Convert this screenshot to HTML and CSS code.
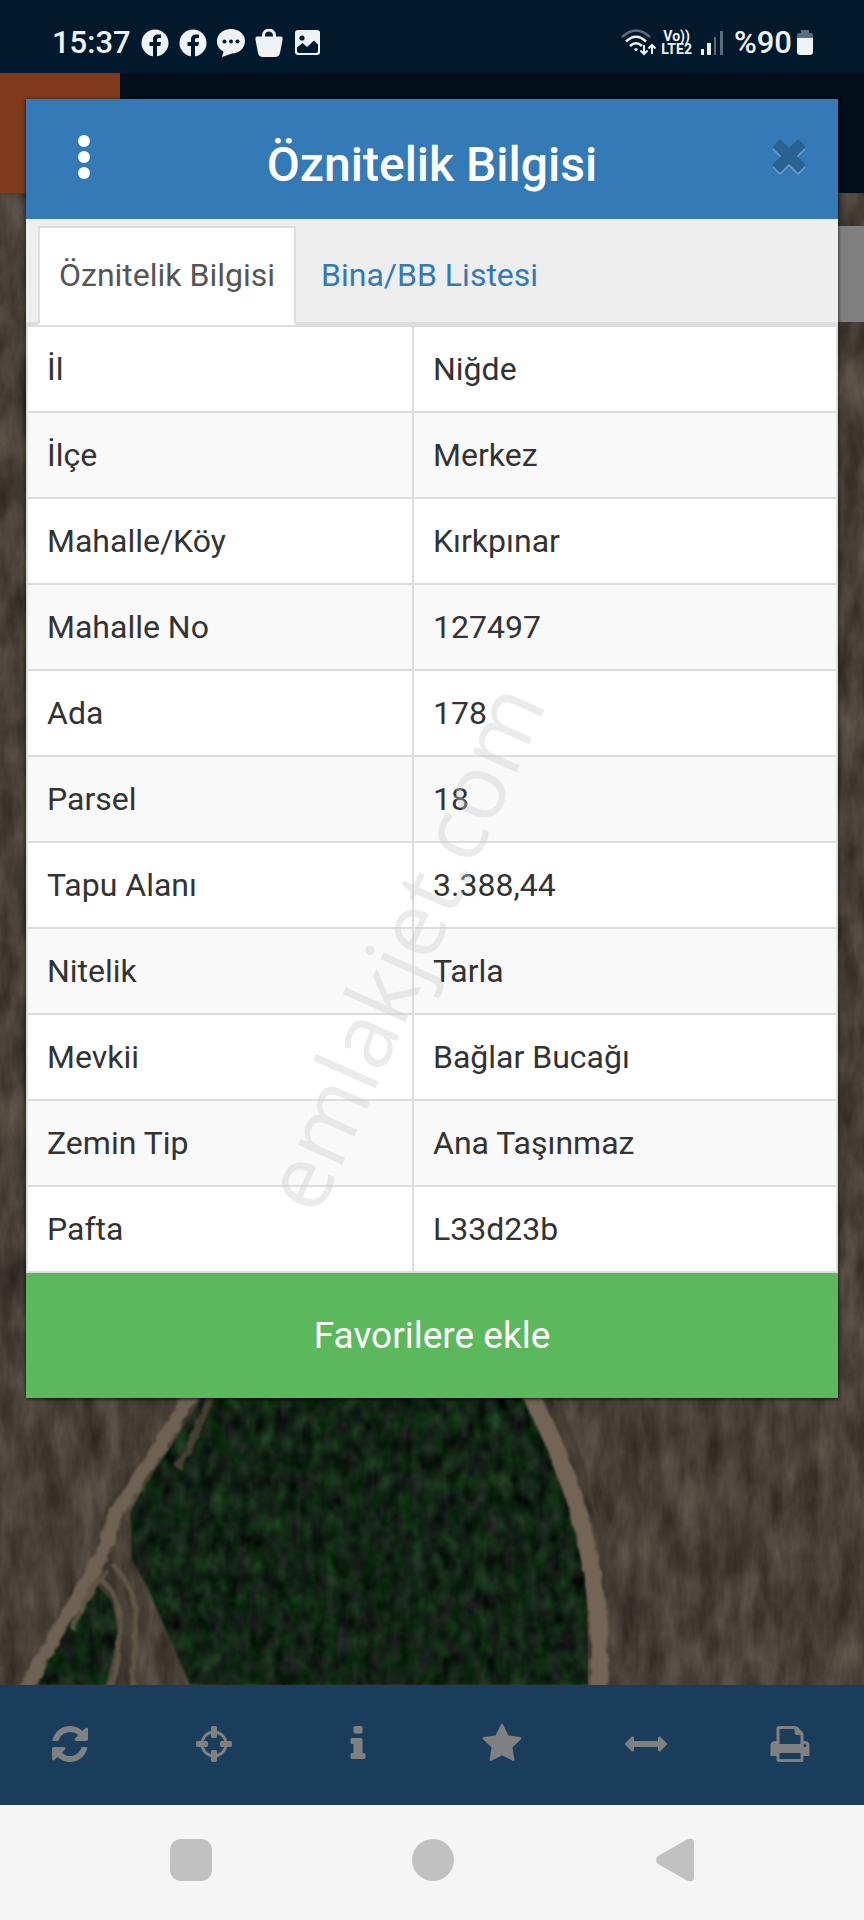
FILE: index.html
```html
<!DOCTYPE html>
<html lang="tr">
<head>
  <meta charset="UTF-8" />
  <meta name="viewport" content="width=device-width, initial-scale=1.0" />
  <title>Öznitelik Bilgisi</title>
  <link rel="stylesheet" href="styles.css">
</head>
<body>
  <div class="screen">
    <header class="status-bar">
      <div class="status-left">
        <span class="clock">15:37</span>
        <svg class="status-icon" viewBox="0 0 28 28"><circle cx="14" cy="14" r="13.500" fill="#eef2f4"/><path d="M12 28V17H8.500v-4H12v-2.500C12 7 14 5.500 17 5.500h3V9h-2c-1.500 0-2 .7-2 2v2h4l-.7 4H16v11z" fill="#00192c"/></svg>
        <svg class="status-icon" viewBox="0 0 28 28"><circle cx="14" cy="14" r="13.500" fill="#eef2f4"/><path d="M12 28V17H8.500v-4H12v-2.500C12 7 14 5.500 17 5.500h3V9h-2c-1.500 0-2 .7-2 2v2h4l-.7 4H16v11z" fill="#00192c"/></svg>
        <svg class="status-icon" viewBox="0 0 28 28"><path d="M14 0c8 0 14 5 14 12s-6 12.500-13 12.500L5 28l1.500-5.500C2.500 20.500 0 17 0 12.500 0 5 6 0 14 0z" fill="#eef2f4"/><g fill="#00192c"><circle cx="7.500" cy="12.500" r="2"/><circle cx="14" cy="12.500" r="2"/><circle cx="20.500" cy="12.500" r="2"/></g></svg>
        <svg class="status-icon" viewBox="0 0 28 28"><path d="M8.500 9V6.500a5.500 5.500 0 0 1 11 0V9" fill="none" stroke="#eef2f4" stroke-width="3"/><path d="M2 7.500h24q2 0 1.600 2.500l-2.600 14q-.8 4-5 4H8q-4.200 0-5-4L.4 10Q0 7.500 2 7.500z" fill="#eef2f4"/></svg>
        <svg class="status-icon" viewBox="0 0 28 28"><rect x="2" y="1" width="25" height="25" rx="3" fill="#eef2f4"/><circle cx="9" cy="9" r="2.600" fill="#00192c"/><path d="M4 18.500l5.500-4.500 4.500 4 7-6.500 4 4v6.500q0 2-2 2H6q-2 0-2-2z" fill="#00192c"/></svg>
      </div>
      <div class="status-right">
        <svg class="wifi-icon" viewBox="0 0 36 28"><g fill="none" stroke="#eef2f4" stroke-width="2.600"><path d="M1 8Q15-5 29 8" stroke="#5a6d7b" stroke-width="2.500"/><path d="M5 12.500Q15 3 25 12.500"/><path d="M9 17q6-5.500 12 0"/></g><circle cx="15" cy="20.500" r="1.600" fill="#eef2f4"/><path d="M23 16v9M19.500 21.500l3.500 3.500 3.500-3.500M31 25v-9M27.500 19.500L31 16l3.500 3.500" fill="none" stroke="#eef2f4" stroke-width="2"/></svg>
        <span class="volte"><span>Vo))</span><span>LTE2</span></span>
        <svg class="signal-icon" viewBox="0 0 24 28"><path d="M1 20h3v6H1zM7 14h4v12H7z" fill="#eef2f4"/><path d="M14 8h2v18h-2zM20 2h3v24h-3z" fill="#5a6d7b"/></svg>
        <span class="battery-text">%90</span>
        <svg class="battery-icon" viewBox="0 0 18 28"><path d="M5 1h8v3h2q2 0 2 2v4H1V6q0-2 2-2h2z" fill="#5a6d7b"/><path d="M1 9h16v14q0 3-3 3H4q-3 0-3-3z" fill="#eef2f4"/></svg>
      </div>
    </header>

    <div class="app-bar"><div class="app-logo"></div></div>

    <main class="map">
      <svg class="map-image" viewBox="0 0 864 1492" preserveAspectRatio="xMidYMax slice" aria-hidden="true">
        <defs>
          <filter id="soil" x="0" y="0" width="100%" height="100%" color-interpolation-filters="sRGB">
            <feTurbulence type="fractalNoise" baseFrequency="0.05 0.018" numOctaves="5" seed="8"/>
            <feColorMatrix values="0.26 0 0 0 0.15  0.25 0 0 0 0.125  0.23 0 0 0 0.1  0 0 0 0 1"/>
            <feComposite in2="SourceGraphic" operator="in"/>
          </filter>
          <filter id="trees" x="0" y="0" width="100%" height="100%" color-interpolation-filters="sRGB">
            <feTurbulence type="fractalNoise" baseFrequency="0.08 0.05" numOctaves="4" seed="3"/>
            <feColorMatrix values="0.2 0 0 0 -0.03  0.18 0.22 0 0 -0.06  0.2 0 0 0 -0.02  0 0 0 0 1"/>
            <feComposite in2="SourceGraphic" operator="in"/>
            <feGaussianBlur stdDeviation="1"/>
          </filter>
          <filter id="rough" x="-10%" y="-10%" width="120%" height="120%" color-interpolation-filters="sRGB">
            <feTurbulence type="fractalNoise" baseFrequency="0.08" numOctaves="2" seed="5"/>
            <feDisplacementMap in="SourceGraphic" scale="6"/>
            <feGaussianBlur stdDeviation="1"/>
          </filter>
        </defs>
        <g filter="url(#soil)"><rect width="864" height="1492" fill="#4b4239"/></g>
        <!-- field -->
        <g filter="url(#trees)"><path d="M215 1180C185 1240 152 1275 130 1320L132 1366 150 1400 190 1492H588L587 1380 576 1325 554 1256 518 1180zM98 1392L112 1410 118 1440 106 1492H38L60 1440z" fill="#13251a"/></g>
        <!-- dirt roads -->
        <g filter="url(#rough)" fill="none">
          <path d="M195 1195Q160 1255 132 1295T108 1350Q80 1400 55 1442L24 1500" stroke="#6e6254" stroke-width="14"/>
          <path d="M112 1370q25 28 24 56t-4 70M108 1378Q82 1405 73 1437M102 1388q20 16 18 50t-10 60" stroke="#5f5648" stroke-width="5"/>
          <path d="M212 1200q-18 48-34 75" stroke="#463f35" stroke-width="7"/>
          <path d="M524 1190Q566 1265 585 1345T598 1500" stroke="#736455" stroke-width="17"/>
          <path d="M552 1200Q594 1280 608 1400" stroke="#463c33" stroke-width="4"/>
        </g>
      </svg>
      <div class="map-field"></div>
    </main>

    <nav class="toolbar">
      <button type="button" aria-label="Yenile"><svg viewBox="0 0 1792 1792"><path d="M1639 1056q0 5-1 7-64 268-268 434.500t-478 166.500q-146 0-282.500-55t-243.500-157l-129 129q-19 19-45 19t-45-19-19-45v-448q0-26 19-45t45-19h448q26 0 45 19t19 45-19 45l-137 137q71 66 161 102t187 36q134 0 250-65t186-179q11-17 53-117 8-23 30-23h192q13 0 22.500 9.500t9.500 22.500zm25-800v448q0 26-19 45t-45 19h-448q-26 0-45-19t-19-45 19-45l138-138q-148-137-349-137-134 0-250 65t-186 179q-11 17-53 117-8 23-30 23h-199q-13 0-22.500-9.500t-9.500-22.500v-7q65-268 270-434.500t480-166.500q146 0 284 55.500t245 156.500l130-129q19-19 45-19t45 19 19 45z"/></svg></button>
      <button type="button" aria-label="Konum"><svg viewBox="0 0 1792 1792"><path d="M1325 1024h-109q-26 0-45-19t-19-45v-128q0-26 19-45t45-19h109q-32-108-112.500-188.500t-188.500-112.500v109q0 26-19 45t-45 19h-128q-26 0-45-19t-19-45v-109q-108 32-188.500 112.500t-112.500 188.500h109q26 0 45 19t19 45v128q0 26-19 45t-45 19h-109q32 108 112.500 188.500t188.500 112.500v-109q0-26 19-45t45-19h128q26 0 45 19t19 45v109q108-32 188.500-112.500t112.500-188.500zm339-192v128q0 26-19 45t-45 19h-143q-37 161-154.500 278.500t-278.500 154.500v143q0 26-19 45t-45 19h-128q-26 0-45-19t-19-45v-143q-161-37-278.500-154.500t-154.500-278.500h-143q-26 0-45-19t-19-45v-128q0-26 19-45t45-19h143q37-161 154.500-278.500t278.500-154.500v-143q0-26 19-45t45-19h128q26 0 45 19t19 45v143q161 37 278.500 154.500t154.500 278.500h143q26 0 45 19t19 45z"/></svg></button>
      <button type="button" aria-label="Bilgi"><svg viewBox="0 0 1792 1792"><path d="M1216 1344v128q0 26-19 45t-45 19h-512q-26 0-45-19t-19-45v-128q0-26 19-45t45-19h64v-384h-64q-26 0-45-19t-19-45v-128q0-26 19-45t45-19h384q26 0 45 19t19 45v576h64q26 0 45 19t19 45zm-128-1152v192q0 26-19 45t-45 19h-256q-26 0-45-19t-19-45v-192q0-26 19-45t45-19h256q26 0 45 19t19 45z"/></svg></button>
      <button type="button" aria-label="Favoriler"><svg viewBox="0 0 1792 1792"><path d="M1728 647q0 22-26 48l-363 354 86 500q1 7 1 20 0 21-10.500 35.500t-30.500 14.500q-19 0-40-12l-449-236-449 236q-22 12-40 12-21 0-31.500-14.500t-10.500-35.500q0-6 2-20l86-500-364-354q-25-27-25-48 0-37 56-46l502-73 225-455q19-41 49-41t49 41l225 455 502 73q56 9 56 46z"/></svg></button>
      <button type="button" aria-label="Ölçüm"><svg viewBox="0 0 1792 1792"><path d="M1792 896q0 26-19 45l-256 256q-19 19-45 19t-45-19-19-45v-128h-1024v128q0 26-19 45t-45 19-45-19l-256-256q-19-19-19-45t19-45l256-256q19-19 45-19t45 19 19 45v128h1024v-128q0-26 19-45t45-19 45 19l256 256q19 19 19 45z"/></svg></button>
      <button type="button" aria-label="Yazdır"><svg viewBox="0 0 1792 1792"><path d="M448 1536h896v-256h-896v256zm0-640h896v-384h-160q-40 0-68-28t-28-68v-160h-640v640zm1152 64q0-26-19-45t-45-19-45 19-19 45 19 45 45 19 45-19 19-45zm128 0v416q0 13-9.500 22.500t-22.500 9.500h-224v160q0 40-28 68t-68 28h-960q-40 0-68-28t-28-68v-160h-224q-13 0-22.500-9.500t-9.500-22.500v-416q0-79 56.500-135.500t135.500-56.500h64v-544q0-40 28-68t68-28h672q40 0 88 20t76 48l152 152q28 28 48 76t20 88v256h64q79 0 135.500 56.500t56.500 135.500z"/></svg></button>
    </nav>

    <nav class="system-nav">
      <button type="button" aria-label="Son uygulamalar"><svg viewBox="0 0 42 42"><rect width="42" height="42" rx="11"/></svg></button>
      <button type="button" aria-label="Ana ekran"><svg viewBox="0 0 42 42"><circle cx="21" cy="21" r="21"/></svg></button>
      <button type="button" aria-label="Geri"><svg viewBox="0 0 42 42"><path d="M4 17L32 1q8-4 8 4v32q0 8-8 4L4 25q-4-4 0-8z"/></svg></button>
    </nav>

    <section class="modal" role="dialog" aria-labelledby="modalTitle">
      <div class="modal-header">
        <button type="button" class="menu-btn" aria-label="Menü"><svg viewBox="0 0 12 44"><circle cx="6" cy="6" r="6"/><circle cx="6" cy="22" r="6"/><circle cx="6" cy="38" r="6"/></svg></button>
        <h1 id="modalTitle">Öznitelik Bilgisi</h1>
        <button type="button" class="close-btn" aria-label="Kapat"><svg viewBox="0 0 34 36"><path d="M7 3q1-1 2 0l8 8 8-8q1-1 2 0l6 6q1 1 0 2l-8 8 8 8q1 1 0 2l-6 6q-1 1-2 0l-8-8-8 8q-1 1-2 0l-6-6q-1-1 0-2l8-8-8-8q-1-1 0-2z" fill="#6ea3d0"/><path d="M7 1q1-1 2 0l8 8 8-8q1-1 2 0l6 6q1 1 0 2l-8 8 8 8q1 1 0 2l-6 6q-1 1-2 0l-8-8-8 8q-1 1-2 0l-6-6q-1-1 0-2l8-8-8-8q-1-1 0-2z" fill="#296292"/></svg></button>
      </div>
      <div class="tabs">
        <a href="#oznitelik" class="tab active">Öznitelik Bilgisi</a>
        <a href="#bina" class="tab">Bina/BB Listesi</a>
      </div>
      <table class="info-table" id="oznitelik">
        <tbody>
          <tr><th scope="row">İl</th><td>Niğde</td></tr>
          <tr><th scope="row">İlçe</th><td>Merkez</td></tr>
          <tr><th scope="row">Mahalle/Köy</th><td>Kırkpınar</td></tr>
          <tr><th scope="row">Mahalle No</th><td>127497</td></tr>
          <tr><th scope="row">Ada</th><td>178</td></tr>
          <tr><th scope="row">Parsel</th><td>18</td></tr>
          <tr><th scope="row">Tapu Alanı</th><td>3.388,44</td></tr>
          <tr><th scope="row">Nitelik</th><td>Tarla</td></tr>
          <tr><th scope="row">Mevkii</th><td>Bağlar Bucağı</td></tr>
          <tr><th scope="row">Zemin Tip</th><td>Ana Taşınmaz</td></tr>
          <tr><th scope="row">Pafta</th><td>L33d23b</td></tr>
        </tbody>
      </table>
      <button type="button" class="fav-btn">Favorilere ekle</button>
    </section>

    <div class="watermark">emlakjet.com</div>
  </div>
</body>
</html>
```
FILE: styles.css
```css
* {
  box-sizing: border-box;
}

html, body {
  margin: 0;
  padding: 0;
  font-family: Roboto, sans-serif;
  background: #f5f5f5;
}

button {
  border: none;
  padding: 0;
  background: none;
  font-family: inherit;
  cursor: pointer;
}

svg {
  display: block;
}

.screen {
  position: relative;
  display: flex;
  flex-direction: column;
  min-height: 100vh;
  overflow: hidden;
}

/* Status bar */
.status-bar {
  display: flex;
  justify-content: space-between;
  align-items: center;
  height: 73px;
  padding: 12px 50px 0 52px;
  background: #00192c;
  color: #eef2f4;
}

.status-left {
  display: flex;
  align-items: center;
  gap: 10px;
}

.status-right {
  display: flex;
  align-items: center;
  gap: 4px;
}

.clock {
  font-size: 31px;
  font-weight: 500;
}

.status-icon {
  width: 28px;
  height: 28px;
}

.wifi-icon {
  width: 36px;
  height: 28px;
}

.volte {
  display: flex;
  flex-direction: column;
  align-items: center;
  font-size: 14px;
  font-weight: 700;
  line-height: 13px;
}

.signal-icon {
  width: 24px;
  height: 28px;
  margin-left: 4px;
}

.battery-text {
  margin-left: 6px;
  font-size: 31px;
  font-weight: 500;
}

.battery-icon {
  width: 18px;
  height: 28px;
}

.app-bar {
  height: 120px;
  background: #000f1a;
}

.app-logo {
  width: 120px;
  height: 120px;
  background: #7f3a1b;
}

/* Map */
.map {
  position: relative;
  flex: 1;
  display: flex;
  justify-content: flex-end;
  align-items: flex-start;
  padding-top: 33px;
  background: #4b4239;
}

.map-image {
  position: absolute;
  inset: 0;
  width: 100%;
  height: 100%;
}

.map-field {
  position: relative;
  width: 40%;
  height: 96px;
  background: #808080;
}

/* Bottom bars */
.toolbar {
  display: grid;
  grid-template-columns: repeat(6, 1fr);
  height: 120px;
  background: #1a3d5c;
}

.toolbar button {
  display: flex;
  justify-content: center;
  align-items: center;
  padding: 0 5px 2px 0;
}

.toolbar svg {
  width: 42px;
  height: 42px;
  fill: #808080;
}

.system-nav {
  display: flex;
  justify-content: space-between;
  align-items: center;
  height: 115px;
  padding: 0 168px 5px 170px;
  background: #f5f5f5;
}

.system-nav svg {
  width: 42px;
  height: 42px;
  fill: #c1c1c1;
}

/* Modal */
.modal {
  position: absolute;
  top: 99px;
  left: 26px;
  right: 26px;
  background: #fff;
  box-shadow: 0 1px 4px rgba(0, 0, 0, 0.8);
}

.modal-header {
  display: flex;
  justify-content: space-between;
  align-items: center;
  height: 120px;
  padding: 0 32px;
  background: #337ab7;
}

.modal-header h1 {
  margin: 12px 0 0;
  font-size: 48px;
  font-weight: 500;
  line-height: 56px;
  color: #fff;
}

.menu-btn, .close-btn {
  display: flex;
  justify-content: center;
  width: 52px;
  padding-bottom: 4px;
}

.menu-btn svg {
  width: 12px;
  height: 44px;
  fill: #fff;
}

.close-btn {
  justify-content: flex-end;
}

.close-btn svg {
  width: 34px;
  height: 36px;
}

.tabs {
  display: flex;
  align-items: flex-end;
  height: 106px;
  padding: 0 12px;
  background: #eee;
  border-bottom: 3px solid #ddd;
}

.tab {
  height: 99px;
  margin: 0 4px -3px 0;
  padding: 0 19px;
  border: 2px solid transparent;
  font-size: 32px;
  line-height: 94px;
  color: #337ab7;
  text-decoration: none;
}

.tab.active {
  background: #fff;
  border-color: #ddd;
  border-bottom-color: #fff;
  color: #555;
}

.info-table {
  width: 100%;
  border-collapse: collapse;
  table-layout: fixed;
}

.info-table th, .info-table td {
  height: 86px;
  padding: 0 19px;
  border: 2px solid #ddd;
  font-size: 32px;
  font-weight: 400;
  line-height: 40px;
  text-align: left;
  color: #333;
}

.info-table th {
  width: 386px;
}

.info-table tr:nth-child(even) {
  background: #f9f9f9;
}

.fav-btn {
  display: block;
  width: 100%;
  height: 125px;
  background: #5cb85c;
  color: #fff;
  font-size: 37px;
}

/* bottom padding puts the text baseline on the centre of the screen */
.watermark {
  position: absolute;
  top: 50%;
  left: 50%;
  padding-bottom: 68px;
  transform: translate(-50%, -50%) rotate(-66deg);
  font-family: "Open Sans", sans-serif;
  font-size: 90px;
  line-height: 120px;
  color: rgba(200, 200, 200, 0.36);
  pointer-events: none;
}
```
